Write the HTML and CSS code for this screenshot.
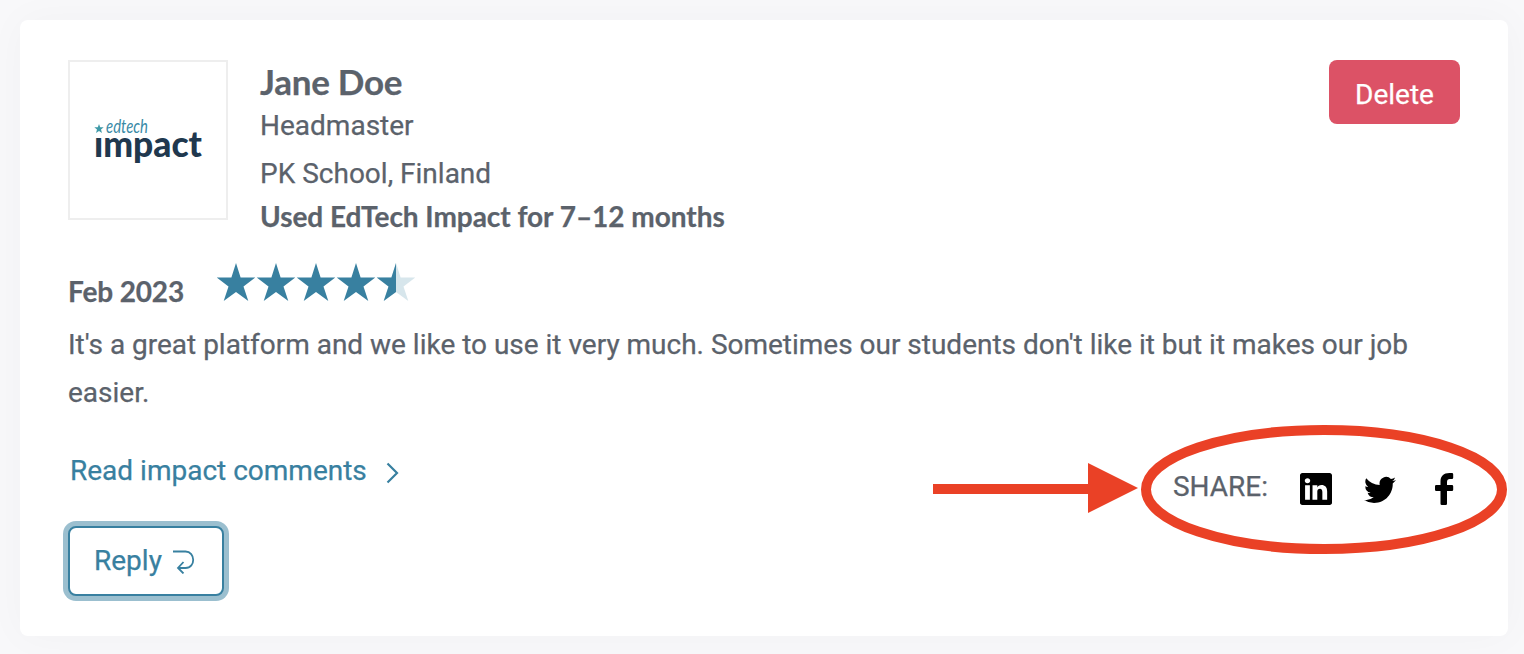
FILE: index.html
```html
<!DOCTYPE html>
<html lang="en">

<head>
  <meta charset="utf-8">
  <title>Review</title>
  <link rel="stylesheet" href="styles.css">
</head>

<body>
  <div class="card">
    <div class="header">
      <div class="logo">
        <svg width="156" height="156" viewBox="0 0 156 156">
          <!-- the star takes the place of the dot on the i -->
          <clipPath id="no-dot"><path d="M20 74h15V55h105v60H20z" /></clipPath>
          <path class="logo-star" d="M29 62l1.2 3.2 3.5.1-2.7 2.2 1 3.5-3-2-3 2 1-3.5-2.7-2.2 3.5-.1z" />
          <text class="logo-top" x="36" y="71" textLength="42" lengthAdjust="spacingAndGlyphs">edtech</text>
          <g clip-path="url(#no-dot)">
            <text class="logo-main" x="24" y="95" textLength="108" lengthAdjust="spacingAndGlyphs">impact</text>
          </g>
        </svg>
      </div>
      <div class="info">
        <div class="name">Jane Doe</div>
        <div class="role">Headmaster</div>
        <div class="school">PK School, Finland</div>
        <div class="usage">Used EdTech Impact for 7–12 months</div>
      </div>
      <button class="delete">Delete</button>
    </div>

    <div class="rating">
      <div class="date">Feb 2023</div>
      <svg class="stars" width="200" height="40" viewBox="0 0 200 40">
        <defs>
          <path id="star" d="M20 0l4.600 14.500H39.300L27.500 23.500 32.300 38 20 29 7.700 38 12.500 23.500.700 14.500H15.400z" />
          <clipPath id="half"><rect width="20" height="40" /></clipPath>
        </defs>
        <use href="#star" />
        <use href="#star" x="40" />
        <use href="#star" x="80" />
        <use href="#star" x="120" />
        <g transform="translate(160 0)">
          <use href="#star" class="star-empty" />
          <g clip-path="url(#half)"><use href="#star" /></g>
        </g>
      </svg>
    </div>

    <p class="review">It's a great platform and we like to use it very much. Sometimes our students don't like it but it makes our job easier.</p>

    <div class="footer">
      <a class="read-more">Read impact comments
        <svg width="14" height="22" viewBox="0 0 14 22"><path d="M1.500 1.500l9.500 9.500L1.500 20.500" /></svg>
      </a>
      <div class="share">
        <span class="share-label">SHARE:</span>
        <svg width="32" height="32" viewBox="0 0 16 16">
          <path d="M0 1.146C0 .513.526 0 1.175 0h13.650C15.474 0 16 .513 16 1.146v13.708c0 .633-.526 1.146-1.175 1.146H1.175C.526 16 0 15.487 0 14.854V1.146zm4.943 12.248V6.169H2.542v7.225h2.401zm-1.200-8.212c.837 0 1.358-.554 1.358-1.248-.015-.709-.520-1.248-1.342-1.248-.822 0-1.359.540-1.359 1.248 0 .694.521 1.248 1.327 1.248h.016zm4.908 8.212V9.359c0-.216.016-.432.080-.586.173-.431.568-.878 1.232-.878.869 0 1.216.662 1.216 1.634v3.865h2.401V9.250c0-2.220-1.184-3.252-2.764-3.252-1.274 0-1.845.700-2.165 1.193v.025h-.016l.016-.025V6.169h-2.400c.030.678 0 7.225 0 7.225h2.400z" />
        </svg>
        <svg width="32" height="32" viewBox="0 0 16 16">
          <path d="M5.026 15c6.038 0 9.341-5.003 9.341-9.334 0-.140 0-.282-.006-.422A6.685 6.685 0 0 0 16 3.542a6.658 6.658 0 0 1-1.889.518 3.301 3.301 0 0 0 1.447-1.817 6.533 6.533 0 0 1-2.087.793A3.286 3.286 0 0 0 7.875 6.030a9.325 9.325 0 0 1-6.767-3.429 3.289 3.289 0 0 0 1.018 4.382A3.323 3.323 0 0 1 .640 6.575v.045a3.288 3.288 0 0 0 2.632 3.218 3.203 3.203 0 0 1-.865.115 3.230 3.230 0 0 1-.614-.057 3.283 3.283 0 0 0 3.067 2.277A6.588 6.588 0 0 1 .780 13.580a6.320 6.320 0 0 1-.780-.045A9.344 9.344 0 0 0 5.026 15z" />
        </svg>
        <svg width="32" height="32" viewBox="0 0 32 32">
          <path d="M25.200 1.300Q25.200 0 23.900 0h-2.400C15.500 0 12.500 3.500 12.500 8v4H8.300q-1.300 0-1.300 1.300v3.400Q7 18 8.300 18h4.200v12.700q0 1.300 1.300 1.300h3.900q1.300 0 1.300-1.300V18h4.900q1.300 0 1.300-1.300v-3.400q0-1.300-1.300-1.300H19V9c0-2 1-3 2.800-3h2.100q1.300 0 1.300-1.300z" />
        </svg>

        <!-- callout around the share links -->
        <svg class="callout" width="576" height="130" viewBox="0 0 576 130">
          <path d="M0 59h155V38l50 25-50 25V69H0z" />
          <ellipse cx="391" cy="64.500" rx="178" ry="59.500" />
        </svg>
      </div>
    </div>

    <button class="reply">Reply
      <svg width="22" height="24" viewBox="0 0 22 24"><path d="M0 1.500h12.500c10 0 10.500 16.500 0 16.500H5M10.500 12L5 18l5.500 5.500" /></svg>
    </button>
  </div>
</body>

</html>
```
FILE: styles.css
```css
body {
  margin: 0;
  padding: 20px 16px 18px 20px;
  background-color: #f8f8fa;
  font-family: Roboto, "Liberation Sans", sans-serif;
  font-size: 28px;
  color: #5b626b;
  -webkit-text-stroke: 0.25px;
}

/* Review card */
.card {
  box-sizing: border-box;
  height: 616px;
  padding: 40px 48px;
  background-color: #fff;
  border-radius: 8px;
  box-shadow: 0 0 40px rgba(40, 40, 70, 0.03);
}

button {
  font: inherit;
  border-radius: 8px;
}

/* Reviewer */
.header {
  display: flex;
  align-items: flex-start;
  height: 200px;
}

.logo {
  width: 156px;
  height: 156px;
  border: 2px solid #eee;
}

.logo-star {
  fill: #3f9aa8;
}

.logo-top {
  font: italic 19px Lato, sans-serif;
  fill: #398aa6;
}

.logo-main {
  font: 900 36px Lato, sans-serif;
  fill: #20384e;
}

.info {
  flex: 1;
  margin-left: 32px;
  padding-top: 1px;
}

.name,
.usage,
.date {
  font-family: Lato, "Open Sans", sans-serif;
  font-weight: 700;
}

.name {
  font-size: 35px;
  line-height: 40px;
  letter-spacing: -0.25px;
}

.role {
  padding-top: 2px;
  line-height: 46px;
}

.school {
  line-height: 50px;
}

.usage {
  line-height: 34px;
  letter-spacing: -0.04px;
}

.delete {
  width: 131px;
  height: 64px;
  padding: 5px 0 0;
  border: none;
  background-color: #dc5266;
  color: #fff;
}

/* Date and stars */
.rating {
  display: flex;
  align-items: flex-start;
  height: 61px;
}

.date {
  width: 148px;
  padding-top: 11px;
  line-height: 40px;
  letter-spacing: -0.15px;
}

.stars {
  margin-top: 3px;
  fill: #3880a0;
}

.star-empty {
  fill: #d7e6ec;
}

.review {
  margin: 0;
  line-height: 48px;
  letter-spacing: -0.01px;
}

/* Links */
.footer {
  display: flex;
  justify-content: space-between;
  height: 48px;
  margin: 30px 0 31px;
}

.read-more {
  display: flex;
  align-items: center;
  gap: 19px;
  padding-left: 2px;
  line-height: 48px;
  color: #3880a0;
}

.read-more svg {
  margin-top: 3px;
  fill: none;
  stroke: #3880a0;
  stroke-width: 2.2;
}

.share {
  position: relative;
  display: flex;
  gap: 32px;
  padding-top: 26px;
}

.share-label {
  line-height: 28px;
}

.callout {
  position: absolute;
  top: -22px;
  right: -49px;
  fill: #ea4126;
}

.callout ellipse {
  fill: none;
  stroke: #ea4126;
  stroke-width: 10;
}

.reply {
  display: flex;
  align-items: center;
  gap: 11px;
  width: 156px;
  height: 70px;
  padding: 0 0 2px 24px;
  border: 2px solid #3880a0;
  background-color: #fff;
  color: #3880a0;
  box-shadow: 0 0 0 5px #9bbfcf;
}

.reply svg {
  margin-top: 4px;
  fill: none;
  stroke: #3880a0;
  stroke-width: 1.8;
}
```
